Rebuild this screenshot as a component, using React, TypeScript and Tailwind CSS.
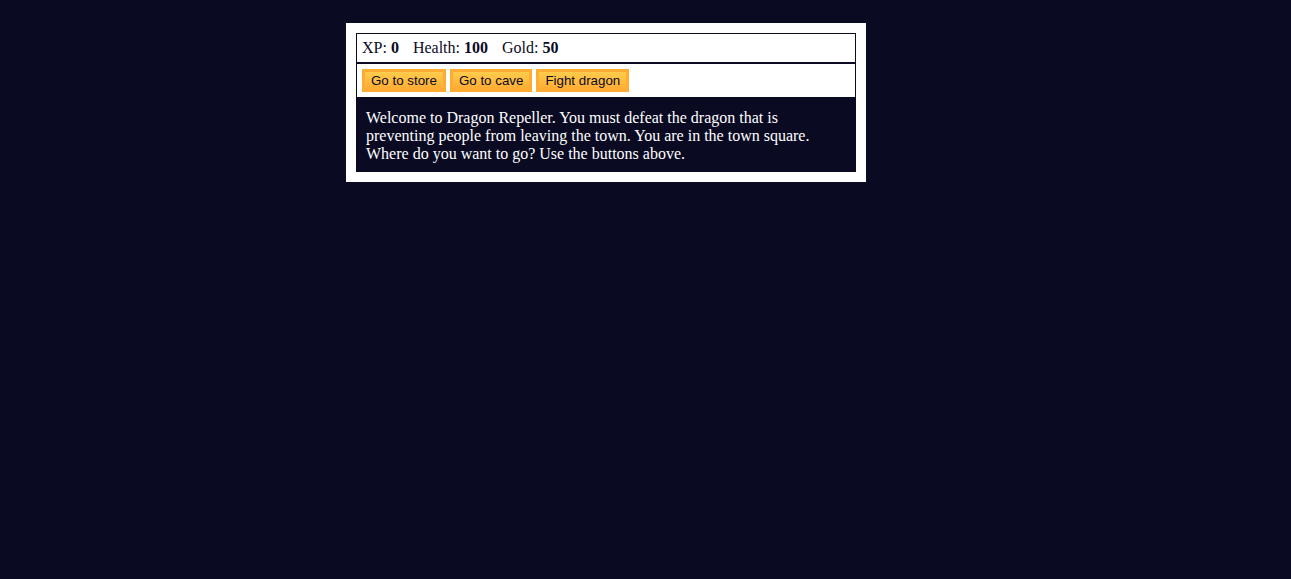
export default function App() {
  const buttons = ["Go to store", "Go to cave", "Fight dragon"];
  return (
    <div className="min-h-screen bg-[#0a0a23] pt-[23px] font-['Liberation_Serif',serif] text-base">
      <div className="ml-[346px] w-[520px] bg-white p-[10px] text-white">
        <div className="border border-[#0a0a23] p-[5px] leading-[18px] text-[#0a0a23]">
          <span className="pr-[10px]">
            XP: <strong>0</strong>
          </span>{" "}
          <span className="pr-[10px]">
            Health: <strong>100</strong>
          </span>{" "}
          <span className="pr-[10px]">
            Gold: <strong>50</strong>
          </span>
        </div>
        <div className="flex gap-1 border border-[#0a0a23] p-[5px]">
          {buttons.map((b) => (
            <button
              key={b}
              className="cursor-pointer border-[3px] border-[#feac32] bg-linear-to-b from-[#fecc4c] to-[#ffac33] px-[6px] py-px font-['Liberation_Sans',Arial,sans-serif] text-[13.33px] leading-[15px] text-[#0a0a23]"
            >
              {b}
            </button>
          ))}
        </div>
        <div className="bg-[#0a0a23] px-[10px] pt-[11px] pb-[9px] leading-[18px] text-white">
          Welcome to Dragon Repeller. You must defeat the dragon that is preventing people from leaving the
          town. You are in the town square. Where do you want to go? Use the buttons above.
        </div>
      </div>
    </div>
  );
}
